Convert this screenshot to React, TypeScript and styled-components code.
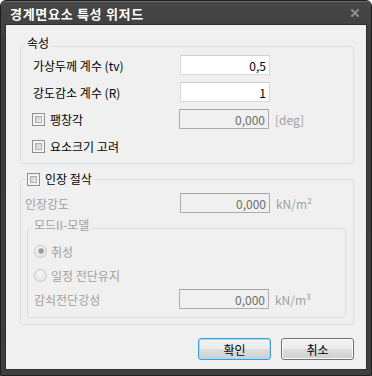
import styled, { createGlobalStyle } from "styled-components";

const GlobalStyle = createGlobalStyle`
  html, body {
    margin: 0;
    padding: 0;
    background: #ffffff;
  }
  body {
    font-family: "Noto Sans CJK KR", "Noto Sans", sans-serif;
    font-size: 12px;
  }
`;

const Window = styled.div`
  width: 372px;
  height: 376px;
  box-sizing: border-box;
  display: flex;
  flex-direction: column;
  background: linear-gradient(#474747, #3d3d3d 40px, #3f3f3f);
  border: 1px solid #1e1e1e;
  border-radius: 6px 6px 0 0;
  box-shadow: inset 0 1px 0 #6a6a6a;
`;

const TitleBar = styled.div`
  height: 24px;
  display: flex;
  align-items: center;
  justify-content: space-between;
  padding: 0 12px 0 9px;
`;

const Title = styled.span`
  color: #ffffff;
  font-weight: bold;
  font-size: 13px;
  letter-spacing: 0.7px;
`;

const Client = styled.div`
  flex: 1;
  margin: 0 5px 6px 5px;
  background: #f0f0f0;
  outline: 1px solid #2e2e2e;
  padding: 12px 12px 0 14px;
  display: flex;
  flex-direction: column;
`;

const GroupBox = styled.fieldset<{ $mt?: number; $mx?: string }>`
  margin: ${(p) => p.$mt ?? 0}px ${(p) => p.$mx ?? "0"};
  padding: 0;
  min-width: 0;
  border: 1px solid #d5dfe5;
  border-radius: 3px;
`;

const Legend = styled.legend<{ $raised?: boolean; $disabled?: boolean }>`
  margin-left: 4px;
  padding: 0 2px ${(p) => (p.$raised ? "6px" : "0")};
  height: 18px;
  box-sizing: border-box;
  line-height: ${(p) => (p.$raised ? "12px" : "18px")};
  display: flex;
  align-items: ${(p) => (p.$raised ? "flex-start" : "center")};
  color: ${(p) => (p.$disabled ? "#a0a0a0" : "#000000")};
`;

const Body = styled.div<{ $pad: string; $gap: number }>`
  padding: ${(p) => p.$pad};
  display: flex;
  flex-direction: column;
  gap: ${(p) => p.$gap}px;
`;

const Row = styled.div`
  height: 20px;
  display: flex;
  align-items: center;
`;

const FieldLabel = styled.span<{ $w: number; $disabled?: boolean }>`
  width: ${(p) => p.$w}px;
  flex-shrink: 0;
  color: ${(p) => (p.$disabled ? "#a0a0a0" : "#000000")};
  white-space: nowrap;
`;

const ValueBox = styled.input<{ $disabled?: boolean }>`
  width: 90px;
  height: 20px;
  box-sizing: border-box;
  margin: 0;
  padding: 0 3px 0 2px;
  text-align: right;
  font-family: "Noto Sans CJK KR", "Noto Sans", sans-serif;
  font-size: 12px;
  color: ${(p) => (p.$disabled ? "#6d6d6d" : "#000000")};
  background: ${(p) => (p.$disabled ? "#f0f0f0" : "#ffffff")};
  border: 1px solid ${(p) => (p.$disabled ? "#acacac" : "#d9d9d9")};
  border-top-color: ${(p) => (p.$disabled ? "#a4a4a4" : "#cfcfcf")};
  border-radius: 1px;
  outline: none;
`;

const Unit = styled.span`
  margin-left: 6px;
  color: #a0a0a0;
  white-space: nowrap;
`;

const Check = styled.span`
  position: relative;
  width: 13px;
  height: 13px;
  box-sizing: border-box;
  flex-shrink: 0;
  border: 1px solid #8f8f8f;
  background: #f4f4f4;
  margin-right: 5px;

  &::after {
    content: "";
    position: absolute;
    inset: 2px;
    border: 1px solid #b0b0b0;
    background: linear-gradient(135deg, #cbcbcb, #eeeeee);
  }
`;

const CheckRow = styled(Row)`
  margin-left: -1px;
`;

const Radio = styled.span<{ $checked?: boolean }>`
  position: relative;
  width: 13px;
  height: 13px;
  box-sizing: border-box;
  flex-shrink: 0;
  border-radius: 50%;
  border: 1px solid #c9c9c9;
  background: radial-gradient(circle at 40% 35%, #f6f6f6, #dedede);
  margin-right: 4px;

  &::after {
    content: "";
    display: ${(p) => (p.$checked ? "block" : "none")};
    position: absolute;
    inset: 2.5px;
    border-radius: 50%;
    background: radial-gradient(circle, #9a9a9a 35%, #c4c4c4 75%);
  }
`;

const ButtonBar = styled.div`
  margin-top: 7px;
  display: flex;
  justify-content: flex-end;
  gap: 10px;
`;

const Button = styled.button<{ $primary?: boolean }>`
  width: 73px;
  height: 22px;
  margin: 0;
  padding: 0;
  font-family: "Noto Sans CJK KR", "Noto Sans", sans-serif;
  font-size: 12px;
  color: #000000;
  border-radius: 3px;
  border: 1px solid ${(p) => (p.$primary ? "#3c9ddc" : "#707070")};
  background: linear-gradient(#f2f2f2 0%, #ebebeb 50%, #dddddd 51%, #cfcfcf 100%);
  box-shadow: inset 0 0 0 1px ${(p) => (p.$primary ? "#a6dbf5" : "#fbfbfb")};
`;

function CloseGlyph() {
  return (
    <svg width="8" height="8" viewBox="0 0 8 8">
      <path d="M1 1 L7 7 M7 1 L1 7" stroke="#8c8c8c" strokeWidth="2.2" strokeLinecap="square" />
    </svg>
  );
}

export default function App() {
  return (
    <>
      <GlobalStyle />
      <Window>
        <TitleBar>
          <Title>경계면요소 특성 위저드</Title>
          <CloseGlyph />
        </TitleBar>
        <Client>
          <GroupBox>
            <Legend $raised>속성</Legend>
            <Body $pad="0 12px 7px 12px" $gap={7}>
              <Row>
                <FieldLabel $w={147}>가상두께 계수 (tv)</FieldLabel>
                <ValueBox readOnly value="0,5" />
              </Row>
              <Row>
                <FieldLabel $w={147}>강도감소 계수 (R)</FieldLabel>
                <ValueBox readOnly value="1" />
              </Row>
              <CheckRow>
                <Check />
                <FieldLabel $w={129}>팽창각</FieldLabel>
                <ValueBox $disabled readOnly value="0,000" />
                <Unit>[deg]</Unit>
              </CheckRow>
              <CheckRow>
                <Check />
                <FieldLabel $w={129}>요소크기 고려</FieldLabel>
              </CheckRow>
            </Body>
          </GroupBox>

          <GroupBox $mt={6}>
            <Legend>
              <Check />
              인장 절삭
            </Legend>
            <Body $pad="5px 5px 6px 4px" $gap={6}>
              <Row>
                <FieldLabel $w={155} $disabled>
                  인장강도
                </FieldLabel>
                <ValueBox $disabled readOnly value="0,000" />
                <Unit>kN/m²</Unit>
              </Row>
              <GroupBox $mx="0 0 0 3px">
                <Legend $raised $disabled>
                  모드II-모델
                </Legend>
                <Body $pad="4px 6px 8px 6px" $gap={4}>
                  <Row>
                    <Radio $checked />
                    <FieldLabel $w={128} $disabled>
                      취성
                    </FieldLabel>
                  </Row>
                  <Row>
                    <Radio />
                    <FieldLabel $w={128} $disabled>
                      일정 전단유지
                    </FieldLabel>
                  </Row>
                  <Row>
                    <FieldLabel $w={145} $disabled>
                      감쇠전단강성
                    </FieldLabel>
                    <ValueBox $disabled readOnly value="0,000" />
                    <Unit>kN/m³</Unit>
                  </Row>
                </Body>
              </GroupBox>
            </Body>
          </GroupBox>

          <ButtonBar>
            <Button $primary>확인</Button>
            <Button>취소</Button>
          </ButtonBar>
        </Client>
      </Window>
    </>
  );
}
